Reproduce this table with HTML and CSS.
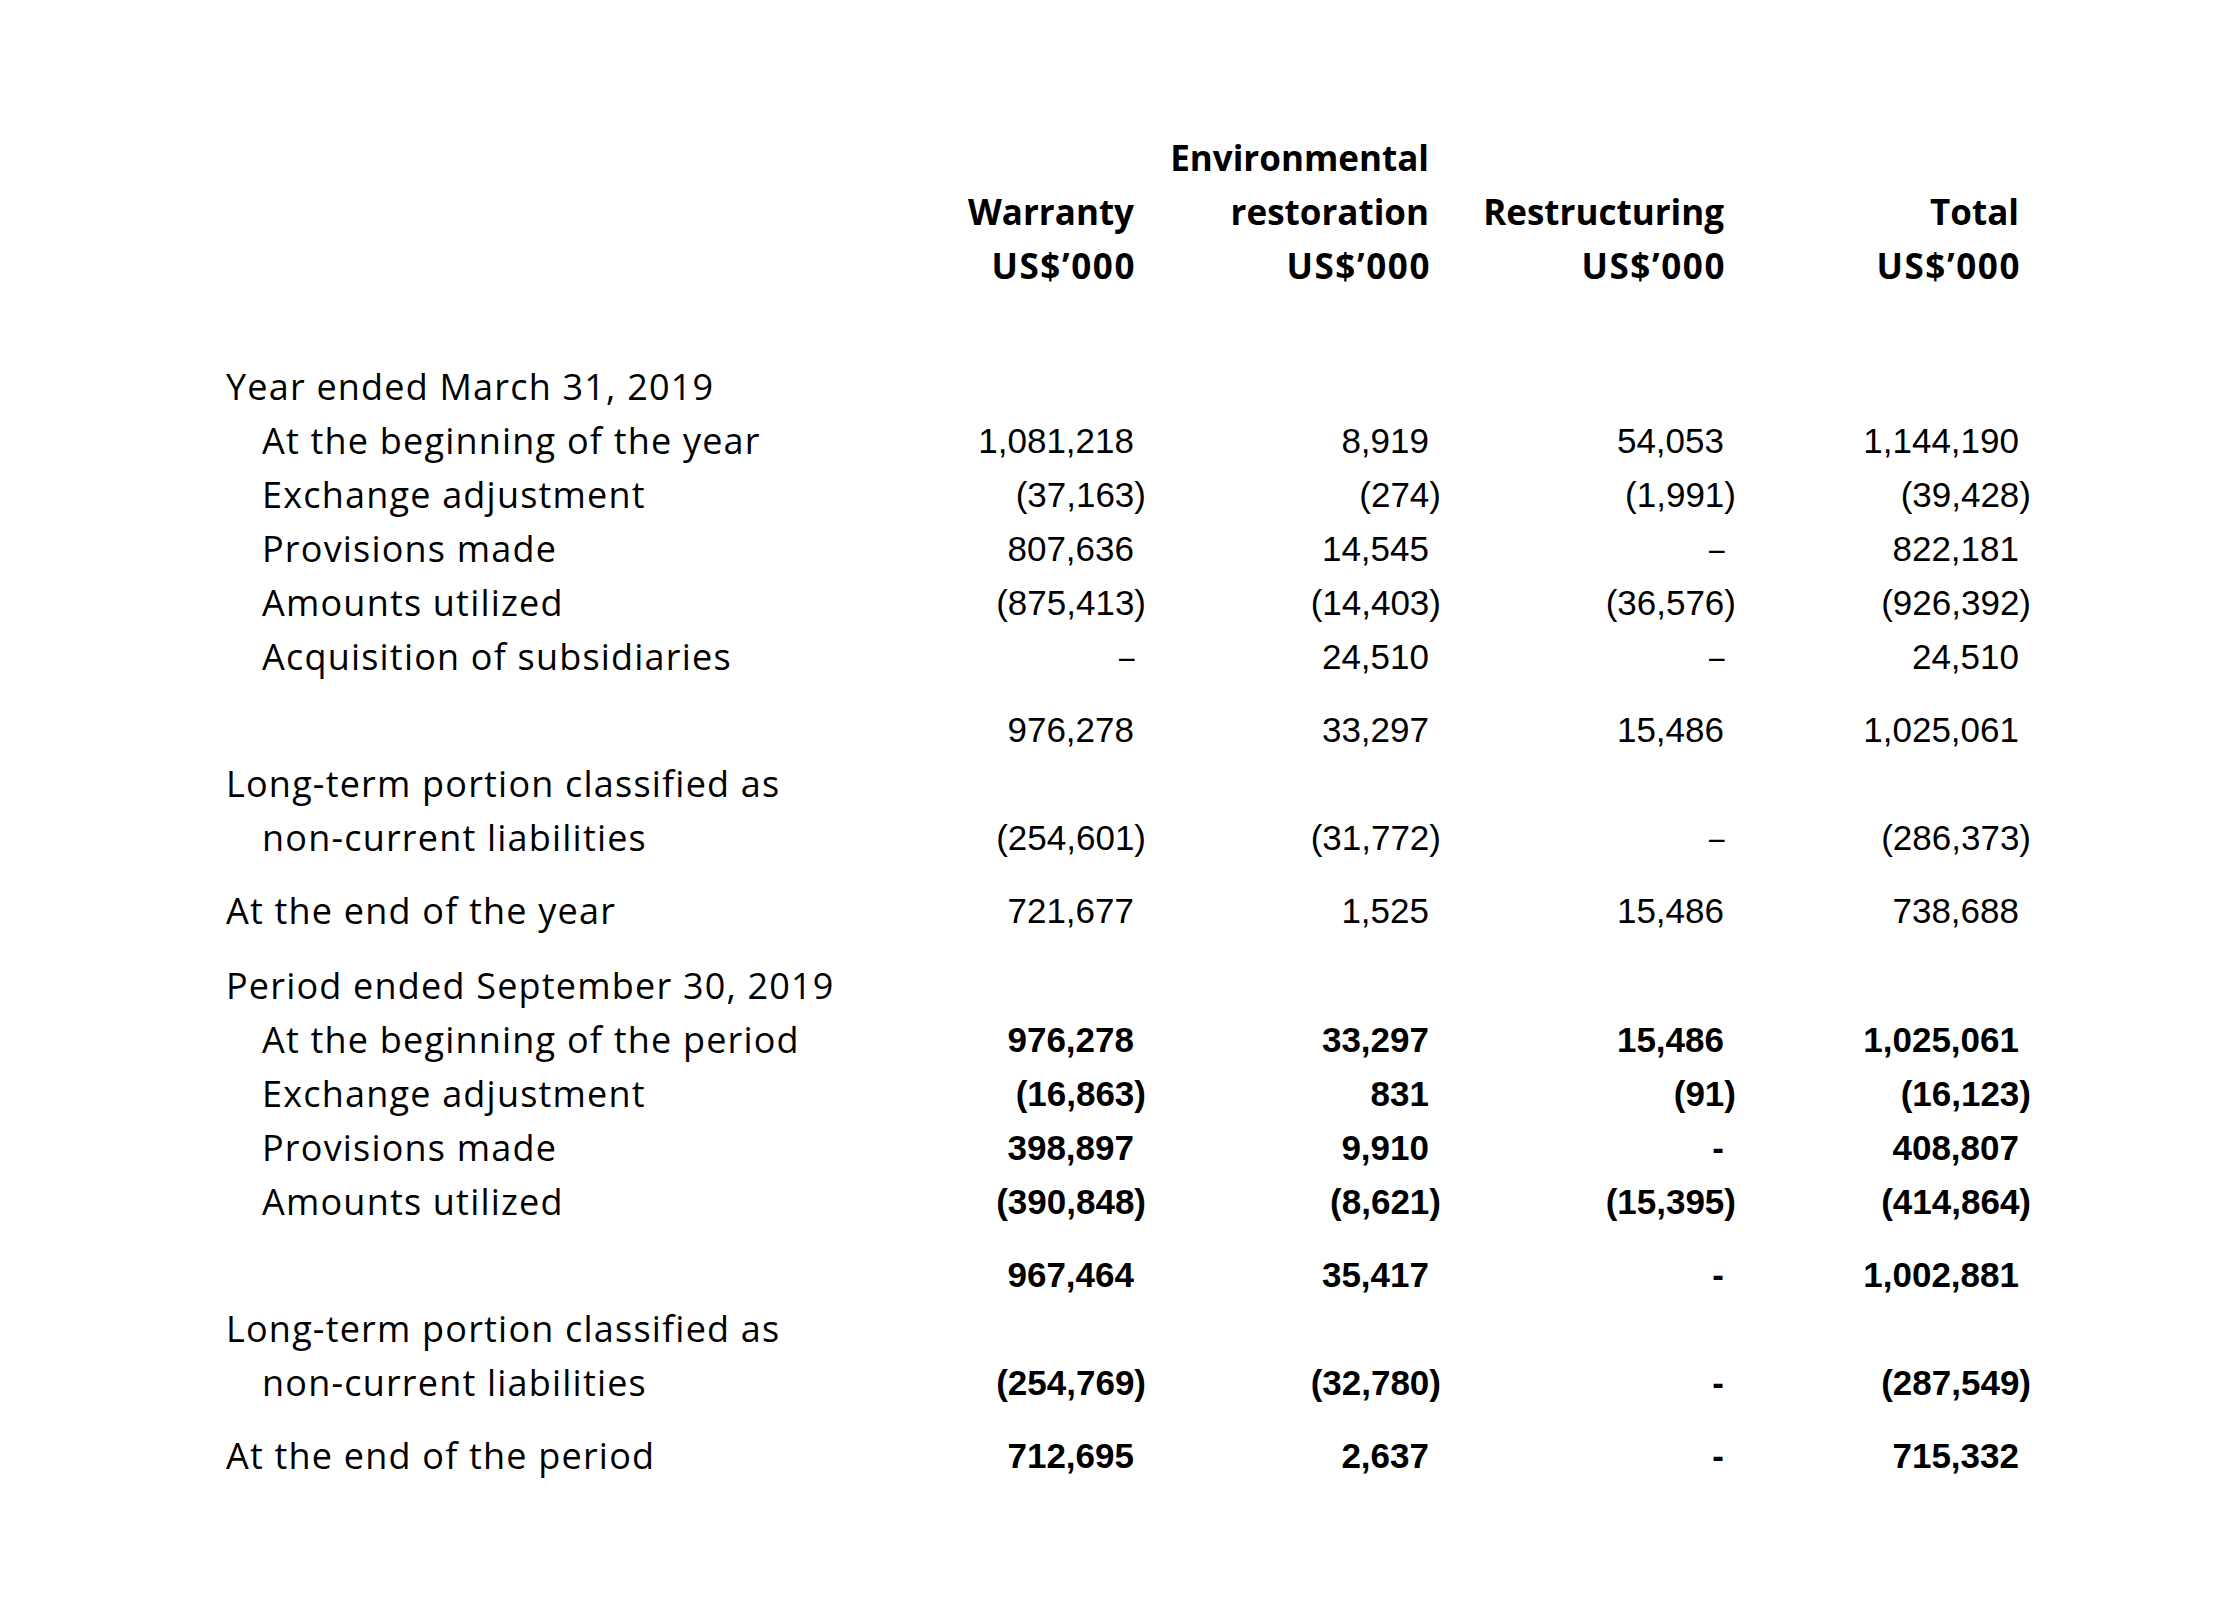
FILE: index.html
```html
<!DOCTYPE html>
<html lang="en">
<head>
<meta charset="utf-8">
<title>Provisions</title>
<link rel="stylesheet" href="styles.css">
</head>
<body>
<div class="sheet">
  <div class="head">
    <div class="row"><span class="lbl"></span><span class="num"></span><span class="num">Environmental</span><span class="num"></span><span class="num"></span></div>
    <div class="row"><span class="lbl"></span><span class="num">Warranty</span><span class="num">restoration</span><span class="num">Restructuring</span><span class="num">Total</span></div>
    <div class="row unit"><span class="lbl"></span><span class="num">US$’000</span><span class="num">US$’000</span><span class="num">US$’000</span><span class="num">US$’000</span></div>
  </div>

  <div class="body">
    <div class="row"><span class="lbl">Year ended March 31, 2019</span><span class="num"></span><span class="num"></span><span class="num"></span><span class="num"></span></div>
    <div class="row"><span class="lbl sub">At the beginning of the year</span><span class="num">1,081,218</span><span class="num">8,919</span><span class="num">54,053</span><span class="num">1,144,190</span></div>
    <div class="row"><span class="lbl sub">Exchange adjustment</span><span class="num"><span class="neg">(37,163)</span></span><span class="num"><span class="neg">(274)</span></span><span class="num"><span class="neg">(1,991)</span></span><span class="num"><span class="neg">(39,428)</span></span></div>
    <div class="row"><span class="lbl sub">Provisions made</span><span class="num">807,636</span><span class="num">14,545</span><span class="num"><span class="dash">–</span></span><span class="num">822,181</span></div>
    <div class="row"><span class="lbl sub">Amounts utilized</span><span class="num"><span class="neg">(875,413)</span></span><span class="num"><span class="neg">(14,403)</span></span><span class="num"><span class="neg">(36,576)</span></span><span class="num"><span class="neg">(926,392)</span></span></div>
    <div class="row"><span class="lbl sub">Acquisition of subsidiaries</span><span class="num"><span class="dash">–</span></span><span class="num">24,510</span><span class="num"><span class="dash">–</span></span><span class="num">24,510</span></div>

    <div class="row gap"><span class="lbl"></span><span class="num">976,278</span><span class="num">33,297</span><span class="num">15,486</span><span class="num">1,025,061</span></div>
    <div class="row"><span class="lbl">Long-term portion classified as</span><span class="num"></span><span class="num"></span><span class="num"></span><span class="num"></span></div>
    <div class="row"><span class="lbl sub">non-current liabilities</span><span class="num"><span class="neg">(254,601)</span></span><span class="num"><span class="neg">(31,772)</span></span><span class="num"><span class="dash">–</span></span><span class="num"><span class="neg">(286,373)</span></span></div>

    <div class="row gap"><span class="lbl">At the end of the year</span><span class="num">721,677</span><span class="num">1,525</span><span class="num">15,486</span><span class="num">738,688</span></div>

    <div class="row gap-lg"><span class="lbl">Period ended September 30, 2019</span><span class="num"></span><span class="num"></span><span class="num"></span><span class="num"></span></div>
    <div class="row bold"><span class="lbl sub">At the beginning of the period</span><span class="num">976,278</span><span class="num">33,297</span><span class="num">15,486</span><span class="num">1,025,061</span></div>
    <div class="row bold"><span class="lbl sub">Exchange adjustment</span><span class="num"><span class="neg">(16,863)</span></span><span class="num">831</span><span class="num"><span class="neg">(91)</span></span><span class="num"><span class="neg">(16,123)</span></span></div>
    <div class="row bold"><span class="lbl sub">Provisions made</span><span class="num">398,897</span><span class="num">9,910</span><span class="num"><span class="bdash">-</span></span><span class="num">408,807</span></div>
    <div class="row bold"><span class="lbl sub">Amounts utilized</span><span class="num"><span class="neg">(390,848)</span></span><span class="num"><span class="neg">(8,621)</span></span><span class="num"><span class="neg">(15,395)</span></span><span class="num"><span class="neg">(414,864)</span></span></div>

    <div class="row bold gap"><span class="lbl"></span><span class="num">967,464</span><span class="num">35,417</span><span class="num"><span class="bdash">-</span></span><span class="num">1,002,881</span></div>
    <div class="row bold"><span class="lbl">Long-term portion classified as</span><span class="num"></span><span class="num"></span><span class="num"></span><span class="num"></span></div>
    <div class="row bold"><span class="lbl sub">non-current liabilities</span><span class="num"><span class="neg">(254,769)</span></span><span class="num"><span class="neg">(32,780)</span></span><span class="num"><span class="bdash">-</span></span><span class="num"><span class="neg">(287,549)</span></span></div>

    <div class="row bold gap"><span class="lbl">At the end of the period</span><span class="num">712,695</span><span class="num">2,637</span><span class="num"><span class="bdash">-</span></span><span class="num">715,332</span></div>
  </div>
</div>
</body>
</html>
```

FILE: styles.css
```css
html, body {
  margin: 0;
  padding: 0;
  background: #ffffff;
  color: #000000;
}

.sheet {
  padding: 131px 0 0 226px;
}

.row {
  display: grid;
  grid-template-columns: 625px repeat(4, 295px);
  height: 54px;
  line-height: 54px;
  white-space: nowrap;
}

.head .num {
  font-family: "Open Sans", "Liberation Sans", sans-serif;
  font-weight: 700;
  font-size: 35px;
}

.head .unit .num {
  letter-spacing: 1.6px;
  padding-right: 10px;
}

.body {
  margin-top: 67px;
}

.lbl {
  font-family: "Open Sans", "Liberation Sans", sans-serif;
  font-size: 36px;
  letter-spacing: 1.2px;
  font-weight: 400;
}

.lbl.sub {
  padding-left: 36px;
}

.num {
  text-align: right;
  padding-right: 12px;
  font-family: "Liberation Sans", Arial, sans-serif;
  font-size: 35px;
}

.bold .num {
  font-weight: 700;
}

.neg {
  margin-right: -12px;
}

.dash {
  display: inline-block;
  transform: scaleX(0.8);
  transform-origin: right center;
}

.gap {
  margin-top: 19px;
}

.gap-lg {
  margin-top: 21px;
}
```
